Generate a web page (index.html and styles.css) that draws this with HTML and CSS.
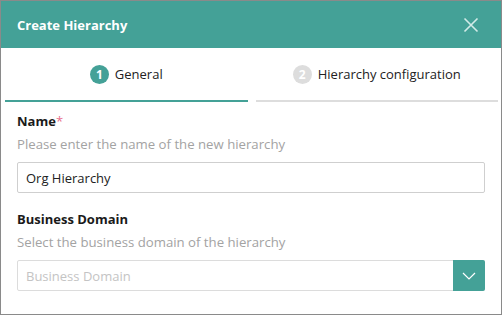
FILE: index.html
```html
<!DOCTYPE html>
<html>
<head>
<meta charset="utf-8">
<link rel="stylesheet" href="styles.css">
</head>
<body>
<div class="dialog">
  <div class="header">
    <span class="title">Create Hierarchy</span>
    <svg class="close" width="16" height="16" viewBox="0 0 16 16"><path d="M1.5 1.5 L14.5 14.5 M14.5 1.5 L1.5 14.5" stroke="#d2ebe8" stroke-width="1.6" fill="none"/></svg>
  </div>
  <div class="tabs">
    <div class="tab active"><span class="num">1</span><span class="tlabel">General</span></div>
    <div class="tab"><span class="num">2</span><span class="tlabel">Hierarchy configuration</span></div>
  </div>
  <div class="body">
    <div class="label">Name<span class="req">*</span></div>
    <div class="hint">Please enter the name of the new hierarchy</div>
    <div class="input">Org Hierarchy</div>
    <div class="label second">Business Domain</div>
    <div class="hint">Select the business domain of the hierarchy</div>
    <div class="select">
      <span class="placeholder">Business Domain</span>
      <span class="btn"><svg width="14" height="8" viewBox="0 0 14 8"><path d="M1 1 L7 7 L13 1" stroke="#ffffff" stroke-width="1.2" fill="none"/></svg></span>
    </div>
  </div>
</div>
</body>
</html>
```
FILE: styles.css
```css
* { box-sizing: border-box; }
html, body { margin: 0; padding: 0; background: #fff; }
body { font-family: "Open Sans", "Noto Sans", sans-serif; color: #222; }
.dialog {
  width: 502px;
  height: 315px;
  border: 1px solid #8a8a8a;
  background: #fff;
}
.header {
  height: 47px;
  background: #44a197;
  display: flex;
  align-items: center;
  justify-content: space-between;
  padding: 0 22px 0 16px;
}
.title { color: #fff; font-weight: 700; font-size: 13px; }
.close { display: block; }
.tabs {
  display: flex;
  gap: 8px;
  padding: 0 3px 0 4px;
}
.tab {
  flex: 1;
  height: 54px;
  border-bottom: 2px solid #dddddd;
  display: flex;
  align-items: center;
  justify-content: center;
  gap: 6px;
  font-size: 13px;
  color: #222;
}
.tab.active { border-bottom-color: #44a197; }
.num {
  width: 19px; height: 19px; border-radius: 50%;
  background: #dddddd; color: #fff;
  font-size: 12px; font-weight: 700;
  display: flex; align-items: center; justify-content: center;
}
.tab.active .num { background: #44a197; }
.body { padding: 9px 16px 0 16px; }
.label { font-weight: 700; font-size: 13px; line-height: 20px; color: #1a1a1a; }
.label.second { margin-top: 16px; }
.req { color: #e8708c; font-weight: 400; }
.hint { margin-top: 3px; font-size: 13.2px; line-height: 20px; color: #a3a3a3; }
.input, .select {
  margin-top: 8px;
  height: 31px;
  border: 1px solid #cfcfcf;
  border-radius: 2px;
  font-size: 13px;
  display: flex;
  align-items: center;
}
.input { padding-left: 8px; color: #222; }
.select { padding-left: 8px; justify-content: space-between; border-color: #dcdcdc; }
.placeholder { color: #c4c4c4; font-size: 13px; }
.btn {
  width: 32px; height: 31px; margin: -1px -1px -1px 0;
  background: #44a197; border-radius: 0 2px 2px 0;
  display: flex; align-items: center; justify-content: center;
}
.btn svg { display: block; }
```
